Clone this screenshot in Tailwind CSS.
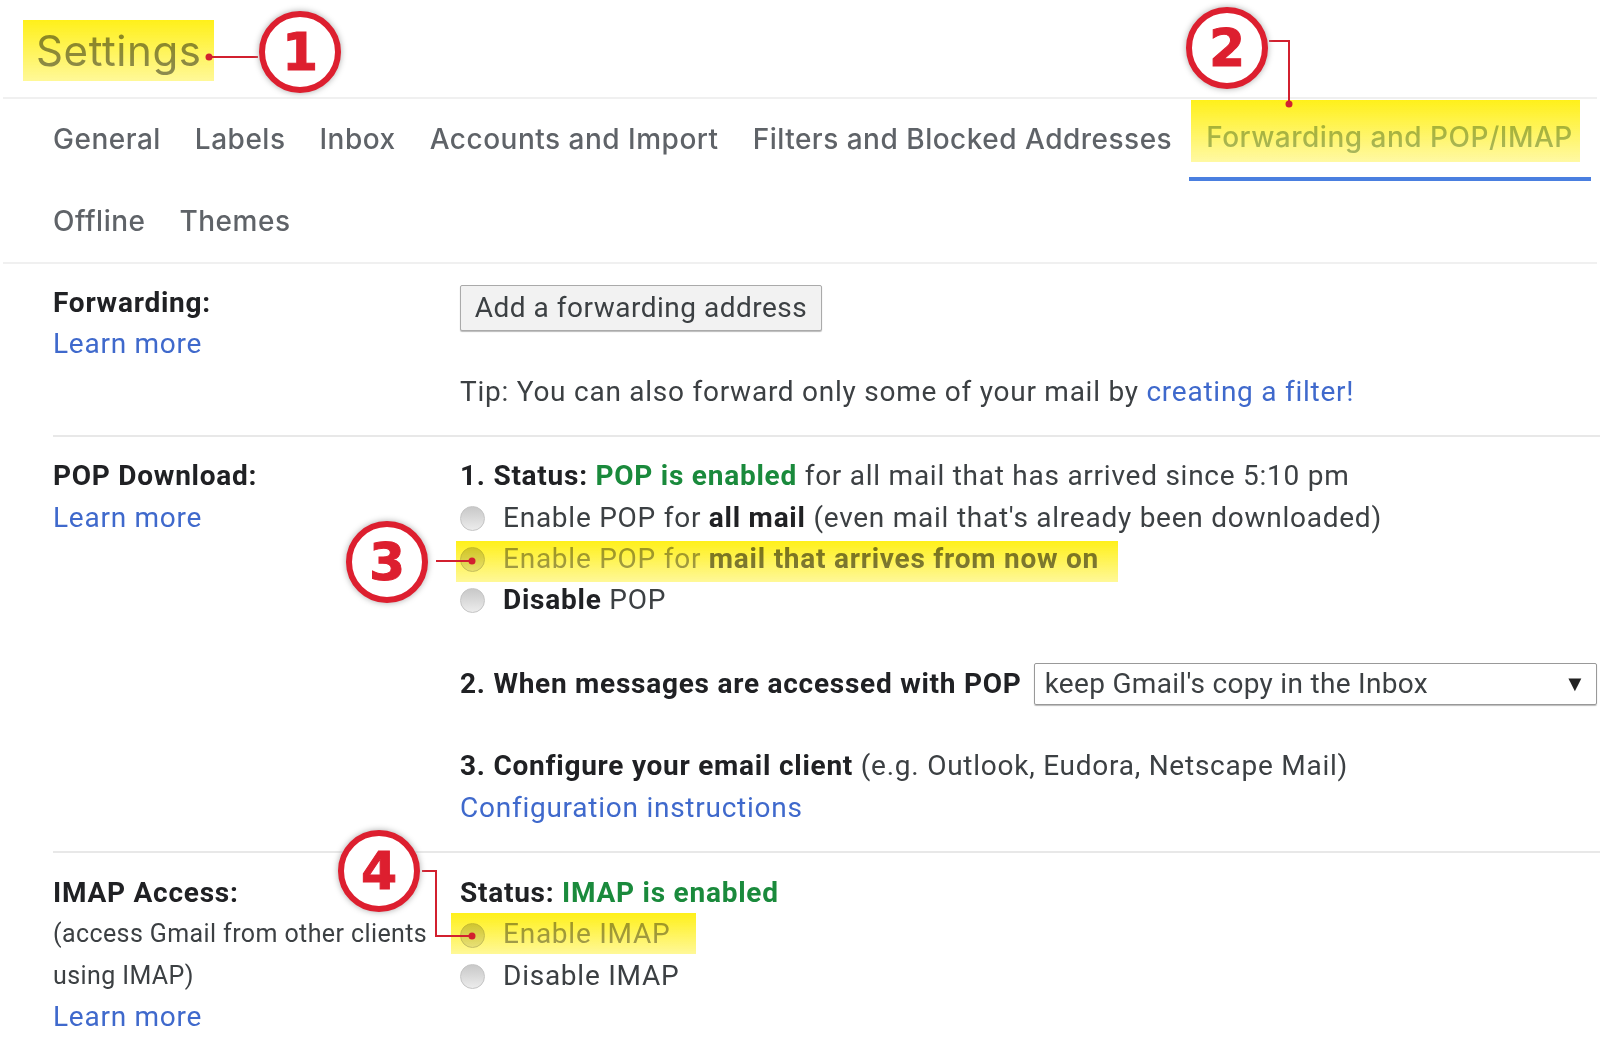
<!DOCTYPE html>
<html lang="en">
<head>
  <meta charset="UTF-8" />
  <title>Settings - Forwarding and POP/IMAP</title>
  <script src="https://cdn.jsdelivr.net/npm/@tailwindcss/browser@4"></script>
</head>
<body class="bg-white">
  <div class="relative w-[1600px] h-[1041px] overflow-hidden font-['Roboto',sans-serif] text-[28px] tracking-[0.75px] leading-[41.3px] text-[#3c4043]">

    <!-- header -->
    <header class="h-[97px] pl-[36px] pt-[23px]">
      <h1 class="font-['Inter',sans-serif] text-[42px] tracking-[0.6px] leading-[56px] text-[#8c8f92]">Settings</h1>
    </header>

    <!-- tabs -->
    <nav class="border-y-2 border-[#f0f0f0] mx-[3px] pl-[33px] font-['Inter',sans-serif] font-medium text-[28px] tracking-[0.5px] text-[#5f6368]">
      <div class="flex h-[82px] items-center">
        <a class="px-[17px]">General</a>
        <a class="px-[17px]">Labels</a>
        <a class="px-[17px]">Inbox</a>
        <a class="px-[17px]">Accounts and Import</a>
        <a class="px-[17px]">Filters and Blocked Addresses</a>
        <a class="px-[17px] h-full flex items-center border-b-4 border-[#4a7fe0] w-[402px] whitespace-nowrap text-[#a8bba5]">Forwarding and POP/IMAP</a>
      </div>
      <div class="flex h-[81px] items-center">
        <a class="px-[17px]">Offline</a>
        <a class="px-[17px]">Themes</a>
      </div>
    </nav>

    <main class="pl-[53px]">
      <!-- forwarding -->
      <section class="grid grid-cols-[407px_1fr] pt-[18px] pb-[23px]">
        <div>
          <div class="font-bold text-[#202124]">Forwarding:</div>
          <a class="text-[#3f69cc]">Learn more</a>
        </div>
        <div>
          <button class="block w-[362px] h-[46px] mt-[3px] border border-[#aaa] rounded-[2px] bg-[#f2f2f2] shadow-[0_1px_1px_#bbb] tracking-[0.5px] text-[#3c4043]">Add a forwarding address</button>
          <p class="mt-[40px]">Tip: You can also forward only some of your mail by <a class="text-[#3f69cc]">creating a filter!</a></p>
        </div>
      </section>

      <!-- pop -->
      <section class="grid grid-cols-[407px_1fr] border-t-2 border-[#e8e8e8] pt-[18px] pb-[23px]">
        <div>
          <div class="font-bold text-[#202124]">POP Download:</div>
          <a class="text-[#3f69cc]">Learn more</a>
        </div>
        <div>
          <p><b class="text-[#202124]">1. Status: </b><b class="text-[#1a8a3c]">POP is enabled</b> for all mail that has arrived since 5:10 pm</p>
          <label class="flex items-center gap-[18px]"><span class="size-[25px] mt-[2px] rounded-full border border-[#c4c4c4] bg-linear-to-b from-[#c8c8c8] to-[#ececec]"></span>
            <span>Enable POP for <b class="text-[#202124]">all mail</b> (even mail that's already been downloaded)</span></label>
          <label class="flex items-center gap-[18px]"><span class="size-[25px] mt-[2px] rounded-full border border-[#c4c4c4] bg-linear-to-b from-[#d0d0d0] to-[#e8e8e8]"></span>
            <span class="text-[#a0a0a0]">Enable POP for <b class="text-[#7c7c7c]">mail that arrives from now on</b></span></label>
          <label class="flex items-center gap-[18px]"><span class="size-[25px] mt-[2px] rounded-full border border-[#c4c4c4] bg-linear-to-b from-[#c8c8c8] to-[#ececec]"></span>
            <span><b class="text-[#202124]">Disable</b> POP</span></label>
          <div class="flex items-center gap-[12px] mt-[43px] h-[41px]">
            <b class="text-[#202124] whitespace-nowrap">2. When messages are accessed with POP</b>
            <div class="flex flex-1 items-center justify-between h-[42px] mr-[3px] pl-[10px] pr-[10px] border border-[#999] rounded-[2px] shadow-[0_1px_1px_#bbb] tracking-[0.3px]">
              <span>keep Gmail's copy in the Inbox</span>
              <span class="text-[22px] text-[#222]">▼</span>
            </div>
          </div>
          <p class="mt-[41px]"><b class="text-[#202124]">3. Configure your email client</b> (e.g. Outlook, Eudora, Netscape Mail)</p>
          <a class="text-[#3f69cc]">Configuration instructions</a>
        </div>
      </section>

      <!-- imap -->
      <section class="grid grid-cols-[407px_1fr] border-t-2 border-[#e8e8e8] pt-[19px]">
        <div>
          <div class="font-bold text-[#202124]">IMAP Access:</div>
          <div class="text-[25px] tracking-[0.4px]">(access Gmail from other clients</div>
          <div class="text-[25px] tracking-[0.4px]">using IMAP)</div>
          <a class="text-[#3f69cc]">Learn more</a>
        </div>
        <div>
          <p><b class="text-[#202124]">Status: </b><b class="text-[#1a8a3c]">IMAP is enabled</b></p>
          <label class="flex items-center gap-[18px]"><span class="size-[25px] mt-[2px] rounded-full border border-[#c4c4c4] bg-linear-to-b from-[#d0d0d0] to-[#e8e8e8]"></span>
            <span class="text-[#a0a0a0]">Enable IMAP</span></label>
          <label class="flex items-center gap-[18px]"><span class="size-[25px] mt-[2px] rounded-full border border-[#c4c4c4] bg-linear-to-b from-[#c8c8c8] to-[#ececec]"></span>
            <span>Disable IMAP</span></label>
        </div>
      </section>
    </main>

    <!-- yellow highlights, multiplied over the text -->
    <div class="absolute left-[23px] top-[20px] w-[191px] h-[61px] mix-blend-multiply bg-linear-to-b from-[#fff01a] to-[#fff01a]/45"></div>
    <div class="absolute left-[1191px] top-[100px] w-[389px] h-[62px] mix-blend-multiply bg-linear-to-b from-[#fff01a] to-[#fff01a]/40"></div>
    <div class="absolute left-[456px] top-[541px] w-[662px] h-[41px] mix-blend-multiply bg-linear-to-b from-[#fff01a] to-[#fff01a]/45"></div>
    <div class="absolute left-[451px] top-[913px] w-[245px] h-[41px] mix-blend-multiply bg-linear-to-b from-[#fff01a] to-[#fff01a]/45"></div>

    <!-- callout lines -->
    <svg class="absolute inset-0" width="1600" height="1041" fill="none" stroke="#d2202f" stroke-width="2">
      <path d="M209 57H258" />
      <path d="M1269 41H1289V104" />
      <path d="M436 561H472" />
      <path d="M422 871H436V936H472" />
      <g fill="#d2202f" stroke="none">
        <circle cx="209" cy="57" r="3.5" />
        <circle cx="1289" cy="104" r="3.5" />
        <circle cx="472" cy="561" r="3.5" />
        <circle cx="472" cy="936" r="3.5" />
      </g>
    </svg>

    <!-- numbered callouts -->
    <div class="absolute left-[259px] top-[11px] flex items-center justify-center size-[82px] pt-[2px] rounded-full border-[6px] border-[#dd1f2f] bg-white shadow-[0_0_6px_#aaa] font-['DejaVu_Sans',sans-serif] font-bold tracking-normal text-[52px] [-webkit-text-stroke:1px_#dd1f2f] text-[#dd1f2f]">1</div>
    <div class="absolute left-[1186px] top-[7px] flex items-center justify-center size-[82px] pt-[2px] rounded-full border-[6px] border-[#dd1f2f] bg-white shadow-[0_0_6px_#aaa] font-['DejaVu_Sans',sans-serif] font-bold tracking-normal text-[52px] [-webkit-text-stroke:1px_#dd1f2f] text-[#dd1f2f]">2</div>
    <div class="absolute left-[346px] top-[521px] flex items-center justify-center size-[82px] pt-[2px] rounded-full border-[6px] border-[#dd1f2f] bg-white shadow-[0_0_6px_#aaa] font-['DejaVu_Sans',sans-serif] font-bold tracking-normal text-[52px] [-webkit-text-stroke:1px_#dd1f2f] text-[#dd1f2f]">3</div>
    <div class="absolute left-[338px] top-[830px] flex items-center justify-center size-[82px] pt-[2px] rounded-full border-[6px] border-[#dd1f2f] bg-white shadow-[0_0_6px_#aaa] font-['DejaVu_Sans',sans-serif] font-bold tracking-normal text-[52px] [-webkit-text-stroke:1px_#dd1f2f] text-[#dd1f2f]">4</div>
  </div>
</body>
</html>
